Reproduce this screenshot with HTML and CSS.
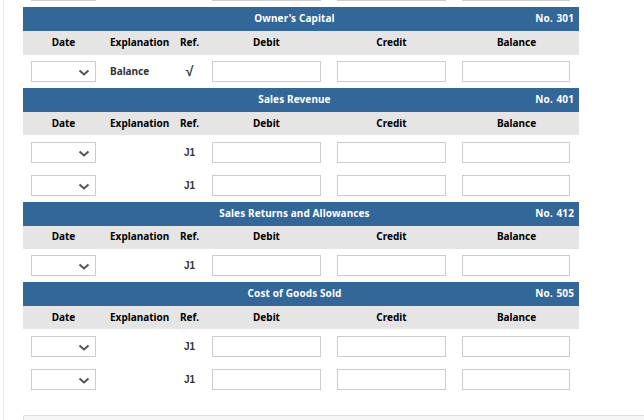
FILE: index.html
```html
<!DOCTYPE html>
<html lang="en">
<head>
    <meta charset="UTF-8">
    <title>General Ledger</title>
    <link rel="stylesheet" href="styles.css">
</head>
<body>

<div class="page">
    <div class="row cut">
        <select class="date"></select>
        <span></span>
        <span></span>
        <input class="amount">
        <input class="amount">
        <input class="amount">
    </div>

    <!-- Owner's Capital -->
    <div class="title"><span class="name">Owner's Capital</span><span class="no">No. 301</span></div>
    <div class="row head"><span>Date</span><span class="expl">Explanation</span><span>Ref.</span><span>Debit</span><span>Credit</span><span>Balance</span></div>
    <div class="row">
        <select class="date"></select>
        <span class="expl note">Balance</span>
        <span class="check">√</span>
        <input class="amount">
        <input class="amount">
        <input class="amount">
    </div>

    <!-- Sales Revenue -->
    <div class="title"><span class="name">Sales Revenue</span><span class="no">No. 401</span></div>
    <div class="row head"><span>Date</span><span class="expl">Explanation</span><span>Ref.</span><span>Debit</span><span>Credit</span><span>Balance</span></div>
    <div class="row">
        <select class="date"></select>
        <span></span>
        <span class="ref">J1</span>
        <input class="amount">
        <input class="amount">
        <input class="amount">
    </div>
    <div class="row">
        <select class="date"></select>
        <span></span>
        <span class="ref">J1</span>
        <input class="amount">
        <input class="amount">
        <input class="amount">
    </div>

    <!-- Sales Returns and Allowances -->
    <div class="title"><span class="name">Sales Returns and Allowances</span><span class="no">No. 412</span></div>
    <div class="row head"><span>Date</span><span class="expl">Explanation</span><span>Ref.</span><span>Debit</span><span>Credit</span><span>Balance</span></div>
    <div class="row">
        <select class="date"></select>
        <span></span>
        <span class="ref">J1</span>
        <input class="amount">
        <input class="amount">
        <input class="amount">
    </div>

    <!-- Cost of Goods Sold -->
    <div class="title"><span class="name">Cost of Goods Sold</span><span class="no">No. 505</span></div>
    <div class="row head"><span>Date</span><span class="expl">Explanation</span><span>Ref.</span><span>Debit</span><span>Credit</span><span>Balance</span></div>
    <div class="row">
        <select class="date"></select>
        <span></span>
        <span class="ref">J1</span>
        <input class="amount">
        <input class="amount">
        <input class="amount">
    </div>
    <div class="row">
        <select class="date"></select>
        <span></span>
        <span class="ref">J1</span>
        <input class="amount">
        <input class="amount">
        <input class="amount">
    </div>

    <div class="footer"></div>
</div>

</body>
</html>
```

FILE: styles.css
```css
html, body {
    margin: 0;
    padding: 0;
    height: 420px;
    overflow: hidden;
    background-color: #fff;
}

body {
    font-family: 'Noto Sans', sans-serif;
    font-size: 10px;
    font-weight: bold;
    color: #333;
}

.page {
    margin-left: 3px;
    padding-left: 19px;
    border-left: 1px solid #e6e6e6;
    height: 420px;
    box-sizing: border-box;
    overflow: hidden;
}

.title {
    width: 556px;
    height: 24px;
    box-sizing: border-box;
    padding: 0 13px 2px 0;
    background-color: #336699;
    color: #fff;
    letter-spacing: 0.1px;
    display: flex;
    align-items: center;
    justify-content: center;
    position: relative;
}

.title .no {
    position: absolute;
    right: 5px;
    word-spacing: 1px;
}

.row {
    width: 556px;
    height: 33.4px;
    box-sizing: border-box;
    padding-top: 0.6px;
    display: grid;
    grid-template-columns: 81px 71px 29px 125px 125px 125px;
    align-items: center;
    justify-items: center;
}

.cut {
    height: 7.49px;
    padding: 0 0 6.49px;
    grid-template-rows: 1px;
    align-items: end;
    overflow: hidden;
}

.head {
    height: 23.1px;
    padding: 0 0 2px;
    background-color: #e5e5e5;
    color: #000;
}

.expl {
    justify-self: start;
    padding-left: 6px;
}

.note {
    padding-bottom: 2px;
}

.ref {
    font-family: 'Liberation Sans', sans-serif;
    color: #333;
}

.check {
    padding-bottom: 2px;
    font-size: 14px;
    line-height: 14px;
}

.date {
    appearance: none;
    width: 65px;
    height: 21px;
    box-sizing: border-box;
    border: 1px solid #ccc;
    background: #fff url("data:image/svg+xml,%3Csvg xmlns='http://www.w3.org/2000/svg' width='12' height='8'%3E%3Cpath d='M1.5 1.5 6 5.5 10.5 1.5' fill='none' stroke='%23555' stroke-width='2'/%3E%3C/svg%3E") no-repeat 46px 7px;
}

.amount {
    width: 109px;
    height: 21px;
    box-sizing: border-box;
    border: 1px solid #ccc;
    background: #fff;
    padding: 0;
}

.amount:last-child {
    width: 108px;
    justify-self: start;
    margin-left: 8px;
}

.footer {
    margin-top: 18.7px;
    width: 621px;
    height: 5px;
    box-sizing: border-box;
    background-color: #f5f5f5;
    border: 1px solid #e0e0e0;
    border-width: 1px 0 0 1px;
    border-radius: 2px 0 0 0;
}
```
